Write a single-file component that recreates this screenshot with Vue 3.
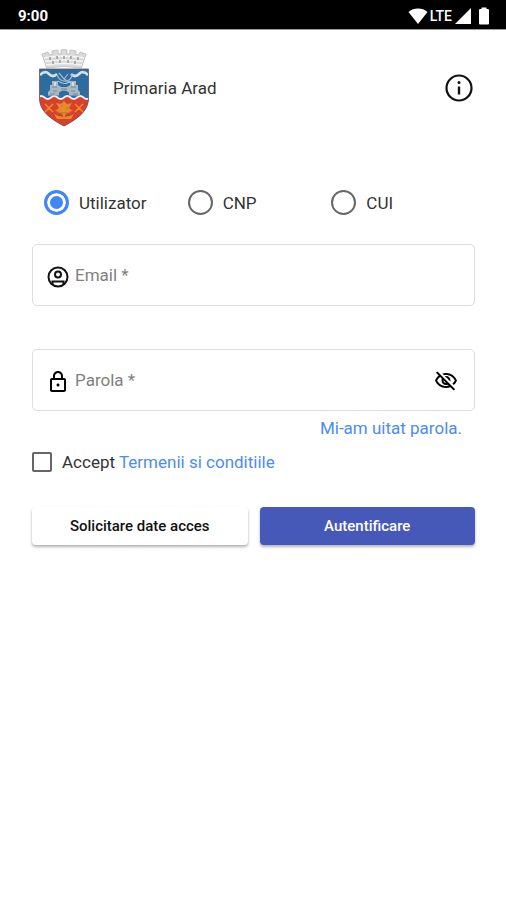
<template>
  <div class="screen">
    <div class="status-bar">
      <span class="clock">9:00</span>
      <div class="status-icons">
        <svg width="20" height="18" viewBox="0 0 20 18"><path d="M10 17 0.5 5C3 2.500 6.500 1.500 10 1.500s7 1 9.500 3.500z" fill="#fff" /></svg>
        <span class="network">LTE</span>
        <svg width="18" height="18" viewBox="0 0 18 18"><path d="M17 1v16H1z" fill="#fff" /></svg>
        <svg class="battery" width="12" height="18" viewBox="0 0 12 18"><path d="M3.500 2V0.500h5V2H10q1 0 1 1v13.500q0 1-1 1H2q-1 0-1-1V3q0-1 1-1z" fill="#fff" /></svg>
      </div>
    </div>

    <header class="header">
      <svg class="crest" viewBox="0 0 52 78" role="img" aria-label="Stema Arad">
        <defs>
          <clipPath id="shield">
            <path d="M1.500 20h49v29c0 13-11 21-24.500 28C12.500 70 1.500 62 1.500 49z" />
          </clipPath>
        </defs>
        <path d="M4 5l6-2 1 3 3-.6L14 2l6-1 .3 4h2.700V.8h6V5h2.700L32 1l6 1v3.400l3 .6 1-3 6 2-4.600 14q-17.400-3-34.800 0z" fill="#dadada" stroke="#b4b4b4" stroke-width=".7" />
        <path d="M6 9q20-4 40 0M7 12.500q19-3 38 0M8 16q18-3 36 0" fill="none" stroke="#f6f6f6" stroke-width="1.400" />
        <path d="M12 8v3m7-4v3m7-3v3m7-3v3m7-2v3M15 12v3m7-4v3m8-3v3m7-2v3" stroke="#9c9c9c" stroke-width="1.500" />
        <g clip-path="url(#shield)">
          <path d="M0 19h52v59H0z" fill="#2e6c9f" />
          <path d="M0 49q3.200-3 6.500 0t6.500 0 6.500 0 6.500 0 6.500 0 6.500 0 6.500 0 6.500 0v29H0z" fill="#d8402a" />
          <path d="M0 48.500q3.200-3 6.500 0t6.500 0 6.500 0 6.500 0 6.500 0 6.500 0 6.500 0 6.500 0" fill="none" stroke="#eee" stroke-width="1.800" />
          <path d="M2 26q5-5 9-1t8 0M50 26q-5-5-9-1t-8 0" fill="none" stroke="#d3e0ea" stroke-width="2.600" />
          <path d="M19 26q3 7 9 6t6-7M21 24l5 6 4-5M26 30l7 4M20 32q7 5 12 0" fill="none" stroke="#9dbbd1" stroke-width="1.200" />
          <path d="M10 46.500V43l2-2v-5h2v-4h6v4l3 2h6l3-2v-4h6v4h2v5l2 2v3.500H31v-3q-5-4-10 0v3z" fill="#a9b7c3" />
          <path d="M14 38h5m-4 4h4m14-4h5m-5 4h4M23 40h6M12 45h5m18 0h5" stroke="#6f8799" stroke-width="1.200" />
          <path d="M17 33v4m18-4v4" stroke="#e3e9ee" stroke-width="1.500" />
          <path d="M26 52l3 3 5-1-3 5 4 3-6 1-3 5-3-5-6-1 4-3-3-5 5 1zM16 65q10 6 20 0l-3 5H19z" fill="#e58a2a" />
          <path d="M7 55l8 8m0-8l-8 8M37 55l8 8m0-8l-8 8M22 59h8m-4-5v15M20 63h12" fill="none" stroke="#ea8b2c" stroke-width="1.600" />
          <path d="M23 57h2m3 2h2m-7 5h6" stroke="#a08d42" stroke-width="1.500" />
        </g>
        <path d="M1.500 20h49v29c0 13-11 21-24.500 28C12.500 70 1.500 62 1.500 49z" fill="none" stroke="#6a5660" stroke-width=".8" />
      </svg>
      <h1 class="title">Primaria Arad</h1>
      <button class="icon-button" type="button" aria-label="Informatii">
        <svg width="32" height="32" viewBox="0 0 32 32">
          <circle cx="16" cy="16" r="12.500" fill="none" stroke="#111" stroke-width="2.200" />
          <circle cx="16" cy="10.500" r="1.500" fill="#111" />
          <path d="M16 14.500v8" stroke="#111" stroke-width="2.400" />
        </svg>
      </button>
    </header>

    <form class="form" @submit.prevent>
      <div class="account-types" role="radiogroup" aria-label="Tip cont">
        <label v-for="type in accountTypes" :key="type" class="account-type">
          <input v-model="accountType" type="radio" name="account-type" :value="type" />
          <span>{{ type }}</span>
        </label>
      </div>

      <div class="field">
        <label for="email" aria-label="Email">
          <svg width="24" height="24" viewBox="0 0 24 24">
            <g fill="none" stroke="#111" stroke-width="2">
              <circle cx="12" cy="12" r="9.500" />
              <circle cx="12" cy="9.500" r="3" />
              <path d="M6.500 19.500v-3h11v3" />
            </g>
          </svg>
        </label>
        <input id="email" v-model="email" type="text" placeholder="Email *" />
      </div>

      <div class="field">
        <label for="password" aria-label="Parola">
          <svg width="24" height="24" viewBox="0 0 24 24"><path d="M18 8h-1V6c0-2.760-2.240-5-5-5S7 3.240 7 6v2H6c-1.100 0-2 .9-2 2v10c0 1.100.9 2 2 2h12c1.100 0 2-.9 2-2V10c0-1.100-.9-2-2-2zM9 6c0-1.660 1.340-3 3-3s3 1.340 3 3v2H9V6zm9 14H6V10h12v10zm-6-3.500c.8 0 1.500-.7 1.500-1.500s-.7-1.500-1.500-1.500-1.500.7-1.500 1.500.7 1.500 1.500 1.500z" /></svg>
        </label>
        <input id="password" v-model="password" :type="showPassword ? 'text' : 'password'" placeholder="Parola *" />
        <button class="icon-button" type="button" aria-label="Arata parola" @click="showPassword = !showPassword">
          <svg width="24" height="24" viewBox="0 0 24 24"><path d="M12 6c3.790 0 7.170 2.130 8.820 5.500-.59 1.220-1.420 2.270-2.410 3.120l1.410 1.410c1.390-1.230 2.490-2.770 3.180-4.530C21.270 7.110 17 4 12 4c-1.270 0-2.490.2-3.640.57l1.650 1.650C10.660 6.090 11.320 6 12 6zm-1.070 1.140L13 9.210c.57.25 1.030.71 1.280 1.280l2.070 2.070c.08-.34.14-.7.14-1.070C16.500 9.010 14.480 7 12 7c-.37 0-.72.05-1.070.14zM2.010 3.870l2.680 2.680C3.060 7.830 1.770 9.530 1 11.500 2.730 15.890 7 19 12 19c1.520 0 2.980-.29 4.320-.82l3.420 3.420 1.410-1.410L3.420 2.450 2.010 3.870zm7.500 7.500l2.610 2.610c-.04.01-.08.02-.12.02-1.380 0-2.500-1.120-2.500-2.500 0-.05.01-.08.01-.13zm-3.400-3.400l1.750 1.750c-.23.550-.36 1.150-.36 1.780 0 2.480 2.020 4.500 4.500 4.500.630 0 1.230-.13 1.770-.36l.98.98c-.88.240-1.800.380-2.750.380-3.790 0-7.170-2.130-8.820-5.500.7-1.430 1.720-2.610 2.930-3.530z" /></svg>
        </button>
      </div>
      <a class="forgot" href="#">Mi-am uitat parola.</a>

      <div class="terms">
        <input id="terms" v-model="accepted" type="checkbox" />
        <label for="terms">Accept</label>
        <a href="#">Termenii si conditiile</a>
      </div>

      <div class="actions">
        <button class="btn btn-secondary" type="button">Solicitare date acces</button>
        <button class="btn btn-primary" type="submit">Autentificare</button>
      </div>
    </form>
  </div>
</template>

<script setup>
import { ref } from 'vue'

const accountTypes = ['Utilizator', 'CNP', 'CUI']
const accountType = ref('Utilizator')
const email = ref('')
const password = ref('')
const showPassword = ref(false)
const accepted = ref(false)
</script>

<style>
body { margin: 0; background: #fff; }
</style>

<style scoped>
.screen {
  font-family: Roboto, sans-serif;
  font-size: 17px;
  line-height: 24px;
  color: #333;
}
svg { display: block; }
a { color: #4c8bf5; text-decoration: none; }

.status-bar {
  display: flex;
  align-items: center;
  justify-content: space-between;
  height: 29px;
  padding: 0 16px 0 18px;
  background: #000;
  border-bottom: 1px solid #999;
  color: #fff;
}
.clock { font-size: 15px; font-weight: 700; padding-top: 2px; }
.status-icons { display: flex; align-items: center; gap: 2px; padding-top: 2px; }
.network { font-size: 14px; font-weight: 500; }
.battery { margin-left: 4px; }

.header {
  display: flex;
  align-items: center;
  padding: 19px 31px 0 38px;
}
.crest { width: 52px; height: 78px; }
.title {
  flex: 1;
  margin: 0 0 0 23px;
  font-size: 17px;
  font-weight: 400;
}
.icon-button {
  padding: 0;
  border: 0;
  background: none;
  color: #000;
  cursor: pointer;
}

.form {
  display: flex;
  flex-direction: column;
  padding: 63px 31px 32px 32px;
}
.account-types {
  display: grid;
  grid-template-columns: repeat(3, 1fr);
  padding-left: 12px;
  margin-bottom: 29px;
}
.account-type {
  display: flex;
  align-items: center;
  gap: 10px;
}
.account-type input {
  appearance: none;
  flex: none;
  width: 25px;
  height: 25px;
  margin: 0;
  border: 2px solid #666;
  border-radius: 50%;
}
.account-type input:checked {
  border: 3px solid #4285f4;
  background: #4285f4;
  box-shadow: inset 0 0 0 3px #fff;
}

.field {
  display: flex;
  align-items: center;
  height: 60px;
  padding: 0 16px 0 13px;
  border: 1px solid #ddd;
  border-radius: 5px;
}
.field + .field { margin-top: 43px; }
.field label { padding-top: 4px; }
.field input {
  flex: 1;
  min-width: 0;
  margin-left: 5px;
  padding: 0;
  border: 0;
  outline: none;
  background: none;
  font: inherit;
}
.field input::placeholder { color: #808080; opacity: 1; }
.field .icon-button { padding-top: 2px; }

.forgot { align-self: flex-end; margin: 5px 13px 0 0; }

.terms { display: flex; align-items: center; margin-top: 10px; }
.terms input {
  appearance: none;
  width: 20px;
  height: 20px;
  margin: 0 10px 0 0;
  border: 2px solid #666;
  border-radius: 2px;
}
.terms input:checked { background: #4285f4; }
.terms label { margin-right: 4px; }

.actions {
  display: grid;
  grid-template-columns: 1fr 1fr;
  gap: 12px;
  margin-top: 33px;
}
.btn {
  height: 38px;
  padding: 0;
  border: 0;
  border-radius: 4px;
  box-shadow: 0 2px 3px rgba(0, 0, 0, 0.3);
  font-family: inherit;
  font-size: 15px;
  font-weight: 500;
  cursor: pointer;
}
.btn-secondary { background: #fff; color: #111; }
.btn-primary { background: #4759b8; color: #fff; }
</style>
